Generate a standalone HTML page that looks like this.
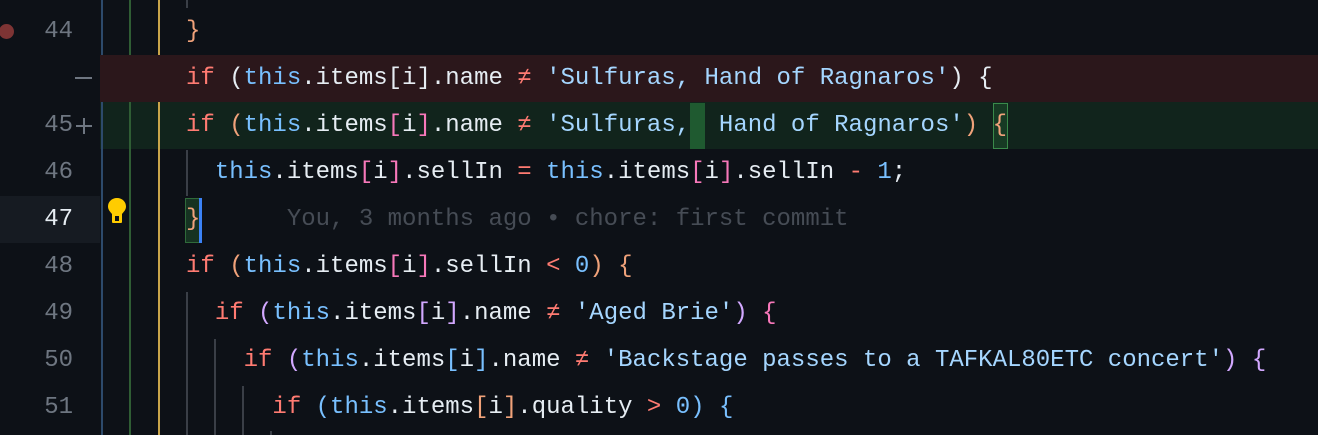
<!DOCTYPE html>
<html><head><meta charset="utf-8"><style>
body{margin:0;width:1318px;height:435px;background:#0d1117;overflow:hidden;position:relative;font-family:"Liberation Mono",monospace;}
.r{position:absolute;left:0;width:1318px;height:47px;}
.code{position:absolute;left:186px;top:0;height:47px;line-height:47px;font-size:24px;white-space:pre;color:#e6edf3;}
.num{position:absolute;left:0;width:73px;text-align:right;line-height:47px;font-size:24px;color:#6e7681;}
.k{color:#ff7b72}.t{color:#79c0ff}.s{color:#a5d6ff}.o{color:#ff7b72}.n{color:#79c0ff}
.b1{color:#f0a27a}.b2{color:#f778ba}.b3{color:#d2a8ff}.b4{color:#79c0ff}
.ne{display:inline-block;width:14.4px;text-align:center}
.v{position:absolute;width:2px;}
.g{position:absolute;width:2px;background:#3a3f47;}
</style></head><body>
<div class="r" style="top:55px;left:100px;width:1218px;background:#2b171b"></div>
<div class="r" style="top:102px;left:100px;width:1218px;background:#11241c"></div>
<div class="r" style="top:196px;width:100px;background:#161b22"></div>
<div class="v" style="left:101px;top:0;height:55px;background:#2d4a6b"></div>
<div class="v" style="left:101px;top:102px;height:333px;background:#2d4a6b"></div>
<div class="v" style="left:129px;top:0;height:55px;background:#2f5d34"></div>
<div class="v" style="left:129px;top:102px;height:333px;background:#2f5d34"></div>
<div class="v" style="left:158px;top:0;height:55px;background:#c9a54a"></div>
<div class="v" style="left:158px;top:102px;height:333px;background:#c9a54a"></div>
<div class="g" style="left:186px;top:0;height:8px"></div>
<div class="g" style="left:186px;top:150px;height:46px"></div>
<div class="g" style="left:186px;top:292px;height:143px"></div>
<div class="g" style="left:214px;top:339px;height:96px"></div>
<div class="g" style="left:242px;top:386px;height:49px"></div>
<div class="g" style="left:270px;top:431px;height:4px"></div>
<div style="position:absolute;left:-1px;top:24px;width:15px;height:15px;border-radius:50%;background:#7d3434"></div>
<div style="position:absolute;left:75px;top:77px;width:17px;height:2px;background:#6e7681"></div>
<div style="position:absolute;left:76px;top:125px;width:16px;height:2px;background:#6e7681"></div>
<div style="position:absolute;left:83px;top:118px;width:2px;height:16px;background:#6e7681"></div>
<svg style="position:absolute;left:105px;top:197px" width="24" height="28" viewBox="0 0 22 28"><path d="M11 1C5.5 1 2 5 2 9.5c0 3.5 2.5 5.5 4 7.5v3h10v-3c1.5-2 4-4 4-7.5C20 5 16.5 1 11 1z" fill="#ffcc00"/><rect x="6" y="19" width="10" height="7" rx="1" fill="#ffcc00"/><rect x="9" y="19" width="4" height="5" fill="#0d1117"/></svg>
<div class="num" style="top:8px">44</div>
<div class="num" style="top:102px">45</div>
<div class="num" style="top:149px">46</div>
<div class="num" style="top:196px;color:#e6edf3">47</div>
<div class="num" style="top:243px">48</div>
<div class="num" style="top:290px">49</div>
<div class="num" style="top:337px">50</div>
<div class="num" style="top:384px">51</div>
<div class="code" style="top:8px"><span class="b1">}</span></div>
<div class="code" style="top:55px"><span class="k">if</span> (<span class="t">this</span>.items[i].name <span class="o ne">≠</span> <span class="s">'Sulfuras, Hand of Ragnaros'</span>) {</div>
<div style="position:absolute;left:690px;top:103px;width:15px;height:46px;background:#1f5a30"></div>
<div style="position:absolute;left:993px;top:103px;width:13px;height:44px;border:1px solid #3a8a4a;background:#173a24"></div>
<div class="code" style="top:102px"><span class="k">if</span> <span class="b1">(</span><span class="t">this</span>.items<span class="b2">[</span>i<span class="b2">]</span>.name <span class="o ne">≠</span> <span class="s">'Sulfuras,  Hand of Ragnaros'</span><span class="b1">)</span> <span class="b1">{</span></div>
<div class="code" style="top:149px">  <span class="t">this</span>.items<span class="b2">[</span>i<span class="b2">]</span>.sellIn <span class="o">=</span> <span class="t">this</span>.items<span class="b2">[</span>i<span class="b2">]</span>.sellIn <span class="o">-</span> <span class="n">1</span>;</div>
<div style="position:absolute;left:185px;top:198px;width:13px;height:43px;border:1px solid #2f6a3a;background:#163322"></div>
<div style="position:absolute;left:199px;top:198px;width:3px;height:45px;background:#3b82f6"></div>
<div class="code" style="top:196px"><span class="b1">}</span>      <span style="color:#464c55">You, 3 months ago • chore: first commit</span></div>
<div class="code" style="top:243px"><span class="k">if</span> <span class="b1">(</span><span class="t">this</span>.items<span class="b2">[</span>i<span class="b2">]</span>.sellIn <span class="o">&lt;</span> <span class="n">0</span><span class="b1">)</span> <span class="b1">{</span></div>
<div class="code" style="top:290px">  <span class="k">if</span> <span class="b3">(</span><span class="t">this</span>.items<span class="b3">[</span>i<span class="b3">]</span>.name <span class="o ne">≠</span> <span class="s">'Aged Brie'</span><span class="b3">)</span> <span class="b2">{</span></div>
<div class="code" style="top:337px">    <span class="k">if</span> <span class="b3">(</span><span class="t">this</span>.items<span class="b4">[</span>i<span class="b4">]</span>.name <span class="o ne">≠</span> <span class="s">'Backstage passes to a TAFKAL80ETC concert'</span><span class="b3">)</span> <span class="b3">{</span></div>
<div class="code" style="top:384px">      <span class="k">if</span> <span class="b4">(</span><span class="t">this</span>.items<span class="b1">[</span>i<span class="b1">]</span>.quality <span class="o">&gt;</span> <span class="n">0</span><span class="b4">)</span> <span class="b4">{</span></div>
</body></html>
